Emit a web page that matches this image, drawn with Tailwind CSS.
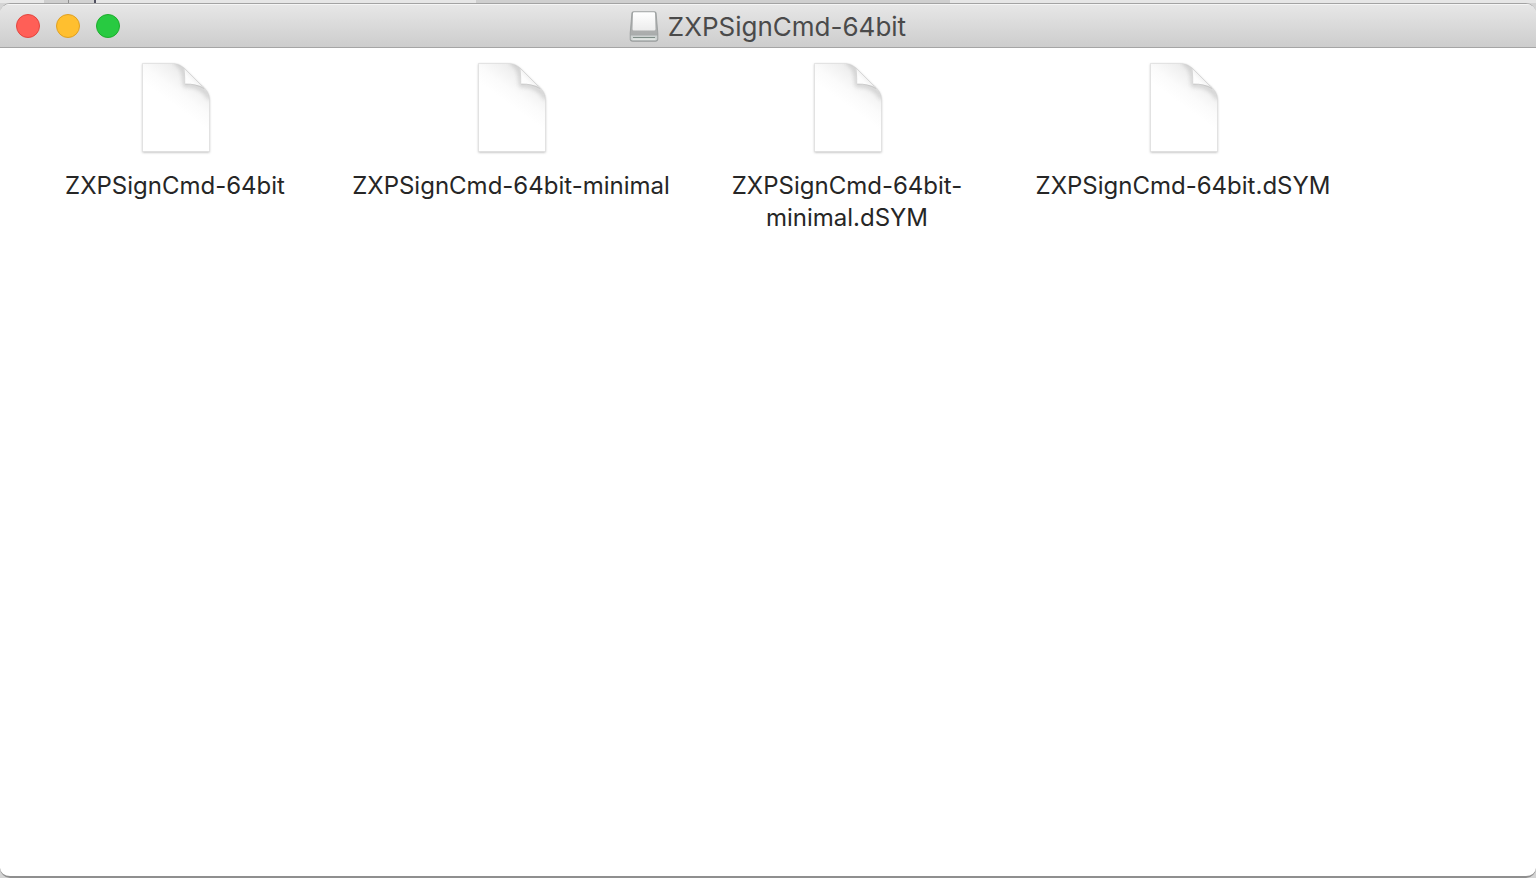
<!DOCTYPE html>
<html lang="en">
<head>
<meta charset="utf-8">
<title>ZXPSignCmd-64bit</title>
<script src="https://cdn.jsdelivr.net/npm/@tailwindcss/browser@4"></script>
</head>
<body class="flex h-screen flex-col overflow-hidden bg-[#d4d4d4] font-['Inter','Liberation_Sans',sans-serif] text-[#262626]">
  <!-- Sliver of the window behind -->
  <div class="flex h-[3px] shrink-0" aria-hidden="true">
    <div class="w-11 bg-[#e8e8e8]"></div>
    <div class="w-6 bg-[#cfcfcf]"></div>
    <div class="w-px bg-[#8e8e8e]"></div>
    <div class="w-[25px] bg-[#d2d2d2]"></div>
    <div class="w-[2px] bg-[#50505f]"></div>
    <div class="w-[380px] bg-[#e6e6e6]"></div>
    <div class="w-[474px] bg-[#cfcfcf]"></div>
    <div class="flex-1 bg-[#e6e6e6]"></div>
  </div>

  <main class="flex min-h-0 flex-1 flex-col overflow-hidden rounded-[10px] border-t border-b-2 border-t-[#a3a3a3] border-b-[#8f8f8f] bg-white">
    <header class="grid h-11 shrink-0 grid-cols-[1fr_auto_1fr] items-center border-b border-[#a5a5a5] bg-linear-to-b from-[#e7e7e7] to-[#cdcdcd] pl-4 pr-[18px] shadow-[inset_0_1px_0_#f5f5f5]">
      <div class="flex gap-4">
        <button type="button" aria-label="Close" class="size-6 rounded-full border border-[#e2463f] bg-[#ff5f57]"></button>
        <button type="button" aria-label="Minimize" class="size-6 rounded-full border border-[#dfa023] bg-[#ffbf2f]"></button>
        <button type="button" aria-label="Zoom" class="size-6 rounded-full border border-[#1dad2c] bg-[#28ca41]"></button>
      </div>
      <div class="flex items-center gap-2 pt-[3px]">
        <svg class="h-8 w-8" viewBox="0 0 32 32" aria-hidden="true">
          <defs>
            <linearGradient id="drive" x1="0" y1="0" x2="0" y2="1"><stop offset="0" stop-color="#a8abab"/><stop offset=".72" stop-color="#acaeae"/><stop offset="1" stop-color="#9ba1a0"/></linearGradient>
            <linearGradient id="lid" x1="0" y1="0" x2="0" y2="1"><stop offset="0" stop-color="#ffffff"/><stop offset="1" stop-color="#ececec"/></linearGradient>
          </defs>
          <path d="M5.200 .8h21.600q1.200 0 1.300 1.300l1.700 20v6.200q0 2-2 2H4.200q-2 0-2-2v-6.200l1.700-20q.1-1.300 1.300-1.300z" fill="url(#drive)" stroke="#959999" stroke-width=".8"/>
          <path d="M6 1.300h20q.9 0 1 1l.5 15.700q0 1.500-1.300 1.500H5.800q-1.300 0-1.300-1.500l.5-15.700q.1-1 1-1z" fill="url(#lid)"/>
          <path d="M2.800 24.500h26.400v3.300q0 1.700-1.700 1.700h-23q-1.700 0-1.700-1.700z" fill="#cdd2d1"/>
          <path d="M5 26.500h22" stroke="#7e8d87" stroke-width="1.200"/>
          <path d="M4.500 28.100h23" stroke="#eef2f0" stroke-width="1"/>
        </svg>
        <h1 class="text-[26px] leading-8 text-[#4a4a4a]">ZXPSignCmd-64bit</h1>
      </div>
      <div></div>
    </header>

    <svg class="absolute size-0" aria-hidden="true">
      <defs>
        <linearGradient id="page" gradientUnits="userSpaceOnUse" x1="56" y1="14" x2="34" y2="44"><stop offset="0" stop-color="#e8e8e8"/><stop offset=".35" stop-color="#f3f3f3"/><stop offset=".65" stop-color="#fbfbfb"/><stop offset="1" stop-color="#ffffff"/></linearGradient>
        <linearGradient id="fold" gradientUnits="userSpaceOnUse" x1="45" y1="23" x2="53" y2="15"><stop offset="0" stop-color="#ffffff"/><stop offset=".6" stop-color="#fcfcfc"/><stop offset="1" stop-color="#f0f0f0"/></linearGradient>
        <filter id="soft" x="-10%" y="-10%" width="120%" height="120%"><feGaussianBlur stdDeviation=".8"/></filter>
        <filter id="shade" x="-50%" y="-50%" width="200%" height="200%"><feGaussianBlur stdDeviation="2"/></filter>
        <clipPath id="sheet"><path d="M2.500 2.500h29c6 0 10 2 14 6l15 15c6 5 9 9 9 16v51h-67z"/></clipPath>
      </defs>
      <symbol id="document" viewBox="0 0 72 94">
        <path d="M2.500 3h29c6 0 10 2 14 6l15 15c6 5 9 9 9 16v51.500h-67z" fill="#b5b5b5" filter="url(#soft)"/>
        <path d="M2.500 2.500h29c6 0 10 2 14 6l15 15c6 5 9 9 9 16v51h-67z" fill="url(#page)" stroke="#dedede" stroke-width=".7"/>
        <g clip-path="url(#sheet)">
          <path d="M35 2c7 1 10 9 10 22 11 0 20 4 25 14" fill="none" stroke="#a0a0a0" stroke-width="3" opacity=".55" filter="url(#shade)"/>
        </g>
        <path d="M44.500 7.500q.9 5 .7 15.500Q54 22.800 62 25z" fill="url(#fold)"/>
        <path d="M45.200 23Q56 22.800 64 27.500" fill="none" stroke="#b8b8b8" stroke-width=".6"/>
        <path d="M42 6q2 1 4 3l16 16" fill="none" stroke="#d2d2d2" stroke-width=".8"/>
      </symbol>
    </svg>

    <ul class="grid grid-cols-[repeat(auto-fill,336px)] pl-2 pt-[13px] text-center text-2xl leading-8">
      <li class="flex flex-col items-center gap-[15px]">
        <svg class="h-[94px] w-[72px]" aria-hidden="true"><use href="#document"/></svg>
        <span class="pr-0.5">ZXPSignCmd-64bit</span>
      </li>
      <li class="flex flex-col items-center gap-[15px]">
        <svg class="h-[94px] w-[72px]" aria-hidden="true"><use href="#document"/></svg>
        <span class="whitespace-nowrap pr-0.5">ZXPSignCmd-64bit-minimal</span>
      </li>
      <li class="flex flex-col items-center gap-[15px]">
        <svg class="h-[94px] w-[72px]" aria-hidden="true"><use href="#document"/></svg>
        <span class="pr-0.5">ZXPSignCmd-64bit-<br>minimal.dSYM</span>
      </li>
      <li class="flex flex-col items-center gap-[15px]">
        <svg class="h-[94px] w-[72px]" aria-hidden="true"><use href="#document"/></svg>
        <span class="whitespace-nowrap pr-0.5">ZXPSignCmd-64bit.dSYM</span>
      </li>
    </ul>
  </main>
</body>
</html>
